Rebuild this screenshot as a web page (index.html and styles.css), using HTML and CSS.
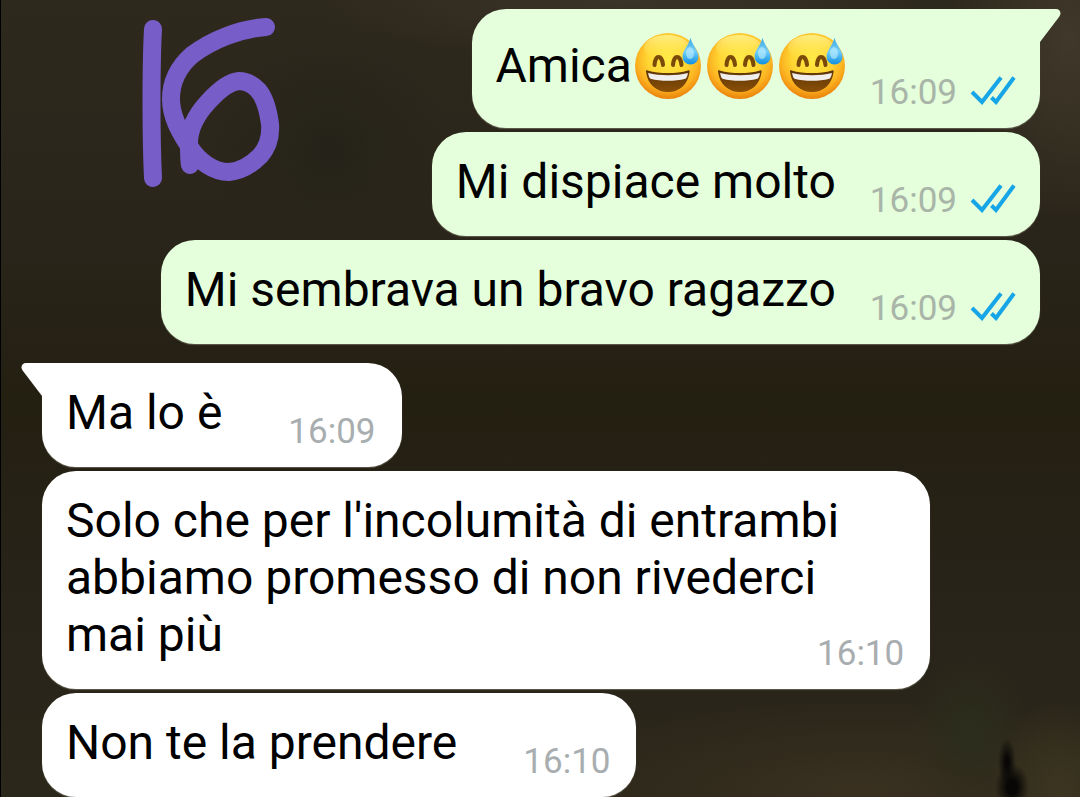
FILE: index.html
```html
<!DOCTYPE html>
<html lang="it">
<head>
    <meta charset="UTF-8">
    <meta name="viewport" content="width=device-width, initial-scale=1.0">
    <title>Chat</title>
    <link rel="stylesheet" href="styles.css">
</head>
<body>
    <!-- Shared icons -->
    <svg class="defs" width="0" height="0" aria-hidden="true">
        <defs>
            <radialGradient id="face" cx="50%" cy="38%" r="62%">
                <stop offset="0" stop-color="#ffea45"/>
                <stop offset="0.5" stop-color="#ffd633"/>
                <stop offset="0.78" stop-color="#fbb01f"/>
                <stop offset="1" stop-color="#ea820c"/>
            </radialGradient>
            <linearGradient id="shine" x1="0" y1="0" x2="0" y2="1">
                <stop offset="0" stop-color="#fff8a8" stop-opacity="0.7"/>
                <stop offset="1" stop-color="#ffe84a" stop-opacity="0"/>
            </linearGradient>
            <linearGradient id="drop" x1="0" y1="0" x2="0" y2="1">
                <stop offset="0" stop-color="#3aa6e4"/>
                <stop offset="0.5" stop-color="#74cffa"/>
                <stop offset="1" stop-color="#0f8fe0"/>
            </linearGradient>
            <linearGradient id="mouth" x1="0" y1="0" x2="0" y2="1">
                <stop offset="0" stop-color="#5d3506"/>
                <stop offset="1" stop-color="#8a4f07"/>
            </linearGradient>
            <symbol id="sweat" viewBox="0 0 66 66">
                <circle cx="33" cy="33" r="33" fill="url(#face)"/>
                <ellipse cx="32" cy="15" rx="23" ry="13" fill="url(#shine)"/>
                <path d="M19.500 32C20 26 22 24 23.500 24S27.500 26 28 32" fill="none" stroke="#7a4a08" stroke-width="4" stroke-linecap="round"/>
                <path d="M38 32C38.500 26 40.500 24 42 24S46 26 46.500 32" fill="none" stroke="#7a4a08" stroke-width="4" stroke-linecap="round"/>
                <path d="M11 38.500C10.500 37.500 11.500 37 12.500 37.400C25 41 41 41 53 37.400C54.500 37 55 37.800 54.600 39C53 52 44 59 33 59S12.500 52 11 38.500Z" fill="url(#mouth)"/>
                <path d="M13 40C25 43 41 43 53 40C52.500 43 51.500 45 50.500 45.800C40 48.500 25.500 48.500 15.500 45.800C14 44.500 13.500 42 13 40Z" fill="#f1eeee"/>
                <path d="M55.500 5C58 14 63.500 17 63.500 23.500A8 8 0 0 1 47.500 23.500C47.500 17 53 14 55.500 5Z" fill="url(#drop)"/>
                <ellipse cx="55" cy="20" rx="4" ry="6" fill="#c5f1ff" opacity="0.6"/>
            </symbol>
            <symbol id="ticks" viewBox="0 0 46 30">
                <path d="M2 17L12 27L31 2.500M21.500 22.500L26 27L44 2.500" fill="none" stroke="#16a5e6" stroke-width="4"/>
            </symbol>
        </defs>
    </svg>

    <main class="chat">
        <section class="group sent">
            <div class="bubble first emoji-message">
                <svg class="tail" viewBox="0 0 22 34" aria-hidden="true"><path d="M0 0H17C21 0 23 4 20 8L1 33H0Z"/></svg>
                <p class="text">Amica<svg class="emoji" role="img" aria-label="😅"><use href="#sweat"/></svg><svg class="emoji" role="img" aria-label="😅"><use href="#sweat"/></svg><svg class="emoji" role="img" aria-label="😅"><use href="#sweat"/></svg></p>
                <div class="meta"><time>16:09</time><svg class="ticks" aria-hidden="true"><use href="#ticks"/></svg></div>
            </div>
            <div class="bubble">
                <p class="text">Mi dispiace molto</p>
                <div class="meta"><time>16:09</time><svg class="ticks" aria-hidden="true"><use href="#ticks"/></svg></div>
            </div>
            <div class="bubble">
                <p class="text">Mi sembrava un bravo ragazzo</p>
                <div class="meta"><time>16:09</time><svg class="ticks" aria-hidden="true"><use href="#ticks"/></svg></div>
            </div>
        </section>

        <section class="group received">
            <div class="bubble first">
                <svg class="tail" viewBox="0 0 22 34" aria-hidden="true"><path d="M22 0H5C1 0 -1 4 2 8L21 33H22Z"/></svg>
                <p class="text">Ma lo è</p>
                <div class="meta"><time>16:09</time></div>
            </div>
            <div class="bubble long">
                <p class="text">Solo che per l'incolumità di entrambi abbiamo promesso di non rivederci mai più</p>
                <div class="meta"><time>16:10</time></div>
            </div>
            <div class="bubble">
                <p class="text">Non te la prendere</p>
                <div class="meta"><time>16:10</time></div>
            </div>
        </section>

        <!-- Number drawn by hand over the chat -->
        <svg class="drawing" viewBox="0 0 140 172" role="img" aria-label="Disegno a mano">
            <path d="M14 13C12 50 12 120 14 162"/>
            <path d="M127 11C100 13 73 24 53 39C37 53 32 68 32 83C32 100 40 115 50 130C60 146 75 156 90 156C102 155 112 149 121 140C129 131 132 120 131 108C129 93 126 82 119 74C114 69 107 65 100 65C89 66 78 76 69 86C57 99 50 113 50 127C50 138 50 146 51 149"/>
        </svg>
    </main>
</body>
</html>
```
FILE: styles.css
```css
* {
    box-sizing: border-box;
}

body {
    margin: 0;
    min-height: 100vh;
    font-family: Roboto, "Noto Sans", sans-serif;
    color: #000;
    /* Dark photo wallpaper */
    background-color: #28231a;
    background-image:
        radial-gradient(ellipse 9px 24px at 1007px 762px, #080705 20%, transparent 100%),
        radial-gradient(ellipse 17px 24px at 1012px 787px, #080705 30%, transparent 100%),
        radial-gradient(ellipse 70px 90px at 1060px 790px, #3b3520, transparent),
        radial-gradient(ellipse 60px 80px at 970px 730px, #2b2d1c, transparent),
        radial-gradient(ellipse 320px 90px at 860px 790px, #393020, transparent),
        radial-gradient(ellipse 120px 180px at 1070px 40px, #40382a, transparent),
        radial-gradient(ellipse 300px 60px at 620px 0px, #3a3328, transparent),
        radial-gradient(ellipse 120px 120px at 330px 150px, #252319, transparent),
        linear-gradient(#2e291d, #2a251a 30%, #231f11 50%, #29241a 78%, #2b271a);
}

.defs {
    position: absolute;
}

.chat {
    position: relative;
    min-height: 100vh;
    padding: 9px 40px 0 41px;
    border-left: 1px solid #000;
    overflow: hidden;
}

.group {
    display: flex;
    flex-direction: column;
    gap: 4px;
    margin-bottom: 19px;
}

.group:last-of-type {
    margin-bottom: 0;
}

.sent {
    align-items: flex-end;
}

.received {
    align-items: flex-start;
}

.bubble {
    position: relative;
    display: flex;
    align-items: flex-end;
    gap: 34px;
    padding: 21px 24px 26px;
    border-radius: 34px;
    box-shadow: 0 1px 1px rgba(150, 150, 130, 0.5);
}

.sent .bubble {
    background: #e5fedb;
    fill: #e5fedb;
}

.received .bubble {
    gap: 66px;
    padding-right: 26px;
    background: #fff;
    fill: #fff;
}

.sent .first {
    border-top-right-radius: 0;
}

.received .first {
    border-top-left-radius: 0;
}

.tail {
    position: absolute;
    top: 0;
    width: 22px;
    height: 34px;
}

.sent .tail {
    left: 100%;
    margin-left: -1px;
}

.received .tail {
    right: 100%;
    margin-right: -1px;
}

.text {
    margin: 0;
    font-size: 48px;
    line-height: 57px;
}

.sent .emoji-message {
    gap: 22px;
}

.emoji-message .text {
    display: flex;
    align-items: center;
    line-height: 72px;
}

.emoji {
    width: 66px;
    height: 66px;
    margin: 0 3px;
}

/* Long messages share one cell with their time */
.long {
    display: grid;
    max-width: 89%;
}

.long .text,
.long .meta {
    grid-area: 1 / 1;
}

.long .text {
    padding-right: 64px;
}

.long .meta {
    align-self: end;
    justify-self: end;
}

.meta {
    display: flex;
    align-items: flex-start;
    gap: 13px;
    margin-bottom: -12px;
    font-size: 35px;
    line-height: 42px;
    color: #a8adb0;
}

.sent .meta {
    color: #a8b5a8;
}

.ticks {
    width: 46px;
    height: 30px;
    margin-top: 3px;
}

.drawing {
    position: absolute;
    top: 16px;
    left: 138px;
    width: 140px;
    height: 172px;
    overflow: visible;
    fill: none;
    stroke: #775dc8;
    stroke-width: 18;
    stroke-linecap: round;
    stroke-linejoin: round;
}
```
